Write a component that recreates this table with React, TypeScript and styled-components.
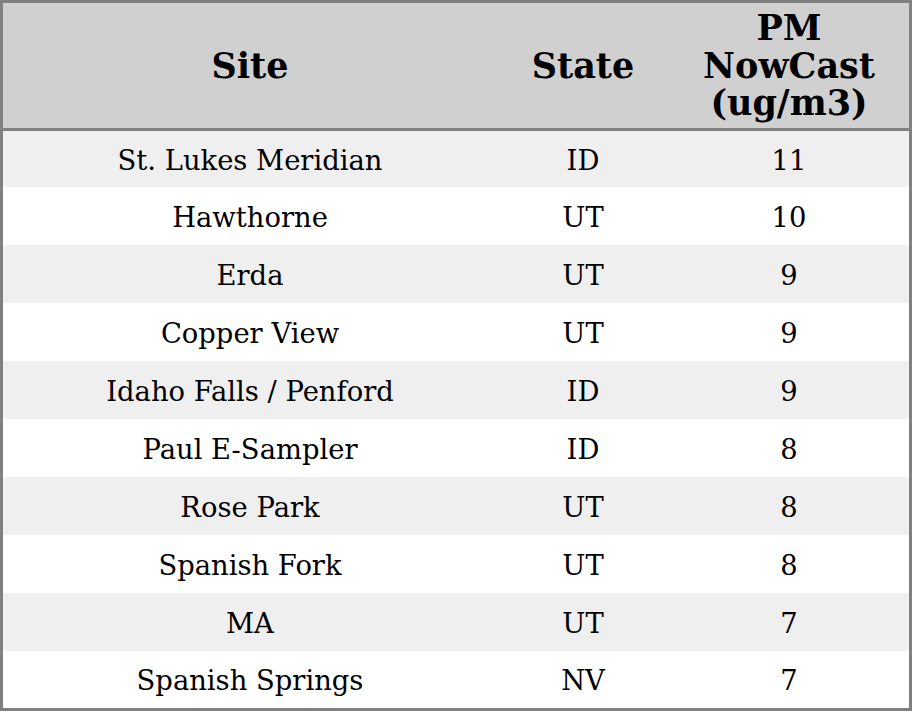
import styled, { createGlobalStyle } from "styled-components";

const GlobalStyle = createGlobalStyle`
  html, body { margin: 0; padding: 0; background: #ffffff; }
  body { font-family: "DejaVu Serif", "Liberation Serif", serif; color: #000; }
`;

const Frame = styled.div`
  width: 912px;
  height: 711px;
  box-sizing: border-box;
  border: 3px solid #808080;
  overflow: hidden;
  display: flex;
  flex-direction: column;
`;

const Grid = styled.div`
  display: grid;
  grid-template-columns: 494px 172px 240px;
`;

const HeadRow = styled(Grid)`
  height: 125px;
  background: #d0d0d0;
  border-bottom: 3px solid #808080;
`;

const HeadCell = styled.div`
  display: flex;
  align-items: center;
  justify-content: center;
  text-align: center;
  font-weight: bold;
  font-size: 35px;
  line-height: 37.5px;
`;

const Row = styled(Grid)<{ $shade: boolean; $h: number }>`
  height: ${(p) => p.$h}px;
  background: ${(p) => (p.$shade ? "#efefef" : "#ffffff")};
`;

const Cell = styled.div`
  display: flex;
  align-items: center;
  justify-content: center;
  padding-top: 3px;
  font-size: 27.4px;
  line-height: 32px;
`;

const rows: [string, string, number][] = [
  ["St. Lukes Meridian", "ID", 11],
  ["Hawthorne", "UT", 10],
  ["Erda", "UT", 9],
  ["Copper View", "UT", 9],
  ["Idaho Falls / Penford", "ID", 9],
  ["Paul E-Sampler", "ID", 8],
  ["Rose Park", "UT", 8],
  ["Spanish Fork", "UT", 8],
  ["MA", "UT", 7],
  ["Spanish Springs", "NV", 7],
];

export default function App() {
  return (
    <>
      <GlobalStyle />
      <Frame>
        <HeadRow>
          <HeadCell>Site</HeadCell>
          <HeadCell>State</HeadCell>
          <HeadCell>
            PM
            <br />
            NowCast
            <br />
            (ug/m3)
          </HeadCell>
        </HeadRow>
        {rows.map(([site, st, v], i) => (
          <Row key={site} $shade={i % 2 === 0} $h={i === 0 ? 56 : i === 9 ? 57 : 58}>
            <Cell>{site}</Cell>
            <Cell>{st}</Cell>
            <Cell>{v}</Cell>
          </Row>
        ))}
      </Frame>
    </>
  );
}
